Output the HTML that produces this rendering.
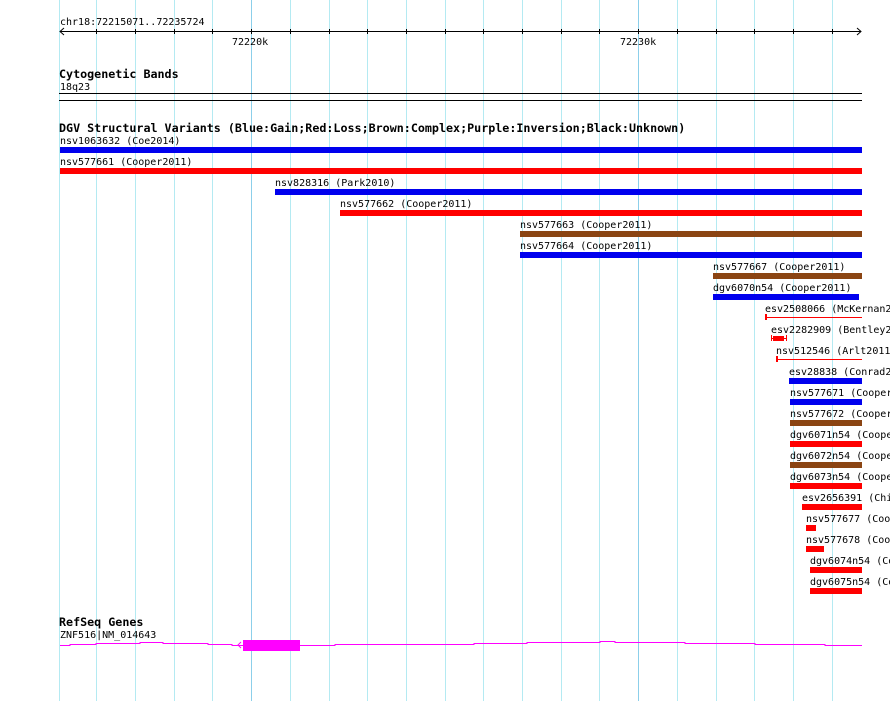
<!DOCTYPE html>
<html><head><meta charset="utf-8"><style>
body{margin:0;background:#fff;}
svg{display:block}
text{font-family:"DejaVu Sans Mono","Liberation Mono",monospace;font-size:10px;fill:#000}
.b{font-family:"DejaVu Sans Mono","Liberation Mono",monospace;font-weight:bold;font-size:11.7px}
</style></head><body>
<svg width="890" height="701" xmlns="http://www.w3.org/2000/svg">
<g stroke="#b4eaf2" stroke-width="1">
<line x1="59.5" y1="0" x2="59.5" y2="701"/>
<line x1="96.5" y1="0" x2="96.5" y2="701"/><line x1="135.5" y1="0" x2="135.5" y2="701"/><line x1="174.5" y1="0" x2="174.5" y2="701"/><line x1="212.5" y1="0" x2="212.5" y2="701"/>
<line x1="251.5" y1="0" x2="251.5" y2="701" stroke="#8ccfea"/><line x1="290.5" y1="0" x2="290.5" y2="701"/><line x1="329.5" y1="0" x2="329.5" y2="701"/><line x1="367.5" y1="0" x2="367.5" y2="701"/><line x1="406.5" y1="0" x2="406.5" y2="701"/><line x1="445.5" y1="0" x2="445.5" y2="701"/><line x1="483.5" y1="0" x2="483.5" y2="701"/><line x1="522.5" y1="0" x2="522.5" y2="701"/><line x1="561.5" y1="0" x2="561.5" y2="701"/><line x1="599.5" y1="0" x2="599.5" y2="701"/>
<line x1="638.5" y1="0" x2="638.5" y2="701" stroke="#8ccfea"/><line x1="677.5" y1="0" x2="677.5" y2="701"/><line x1="716.5" y1="0" x2="716.5" y2="701"/><line x1="754.5" y1="0" x2="754.5" y2="701"/><line x1="793.5" y1="0" x2="793.5" y2="701"/><line x1="832.5" y1="0" x2="832.5" y2="701"/>
</g>
<text x="60" y="25">chr18:72215071..72235724</text>
<line x1="60" y1="31.5" x2="861" y2="31.5" stroke="#000"/>
<path d="M64 28L60 31.5L64 35M857 28L861 31.5L857 35" fill="none" stroke="#000"/>
<g stroke="#000"><path d="M96.5 29v5M135.5 29v5M174.5 29v5M212.5 29v5M251.5 29v5M290.5 29v5M329.5 29v5M367.5 29v5M406.5 29v5M445.5 29v5M483.5 29v5M522.5 29v5M561.5 29v5M599.5 29v5M638.5 29v5M677.5 29v5M716.5 29v5M754.5 29v5M793.5 29v5M832.5 29v5"/></g>
<text x="232" y="45">72220k</text><text x="620" y="45">72230k</text>
<text x="59" y="78" class="b">Cytogenetic Bands</text>
<text x="60" y="90">18q23</text>
<line x1="59" y1="93.5" x2="862" y2="93.5" stroke="#000"/>
<line x1="59" y1="100.5" x2="862" y2="100.5" stroke="#000"/>
<text x="59" y="132" class="b">DGV Structural Variants (Blue:Gain;Red:Loss;Brown:Complex;Purple:Inversion;Black:Unknown)</text>
<g>
<text x="60" y="144">nsv1063632 (Coe2014)</text><rect x="60" y="147" width="802" height="6" fill="#0000ee"/>
<text x="60" y="165">nsv577661 (Cooper2011)</text><rect x="60" y="168" width="802" height="6" fill="#ff0000"/>
<text x="275" y="186">nsv828316 (Park2010)</text><rect x="275" y="189" width="587" height="6" fill="#0000ee"/>
<text x="340" y="207">nsv577662 (Cooper2011)</text><rect x="340" y="210" width="522" height="6" fill="#ff0000"/>
<text x="520" y="228">nsv577663 (Cooper2011)</text><rect x="520" y="231" width="342" height="6" fill="#8b4513"/>
<text x="520" y="249">nsv577664 (Cooper2011)</text><rect x="520" y="252" width="342" height="6" fill="#0000ee"/>
<text x="713" y="270">nsv577667 (Cooper2011)</text><rect x="713" y="273" width="149" height="6" fill="#8b4513"/>
<text x="713" y="291">dgv6070n54 (Cooper2011)</text><rect x="713" y="294" width="146" height="6" fill="#0000ee"/>
<text x="765" y="312">esv2508066 (McKernan2009)</text><rect x="765" y="317" width="97" height="1" fill="#ff0000"/><rect x="765" y="314" width="2" height="6" fill="#ff0000"/>
<text x="771" y="333">esv2282909 (Bentley2008)</text><rect x="771" y="338" width="16" height="1" fill="#ff0000"/><rect x="773" y="336" width="11" height="5" fill="#ff0000"/><rect x="771" y="335" width="1" height="6" fill="#ff0000"/><rect x="786" y="335" width="1" height="6" fill="#ff0000"/>
<text x="776" y="354">nsv512546 (Arlt2011)</text><rect x="776" y="359" width="86" height="1" fill="#ff0000"/><rect x="776" y="356" width="2" height="6" fill="#ff0000"/>
<text x="789" y="375">esv28838 (Conrad2009)</text><rect x="789" y="378" width="73" height="6" fill="#0000ee"/>
<text x="790" y="396">nsv577671 (Cooper2011)</text><rect x="790" y="399" width="72" height="6" fill="#0000ee"/>
<text x="790" y="417">nsv577672 (Cooper2011)</text><rect x="790" y="420" width="72" height="6" fill="#8b4513"/>
<text x="790" y="438">dgv6071n54 (Cooper2011)</text><rect x="790" y="441" width="72" height="6" fill="#ff0000"/>
<text x="790" y="459">dgv6072n54 (Cooper2011)</text><rect x="790" y="462" width="72" height="6" fill="#8b4513"/>
<text x="790" y="480">dgv6073n54 (Cooper2011)</text><rect x="790" y="483" width="72" height="6" fill="#ff0000"/>
<text x="802" y="501">esv2656391 (Chiang2012)</text><rect x="802" y="504" width="60" height="6" fill="#ff0000"/>
<text x="806" y="522">nsv577677 (Cooper2011)</text><rect x="806" y="525" width="10" height="6" fill="#ff0000"/>
<text x="806" y="543">nsv577678 (Cooper2011)</text><rect x="806" y="546" width="18" height="6" fill="#ff0000"/>
<text x="810" y="564">dgv6074n54 (Cooper2011)</text><rect x="810" y="567" width="52" height="6" fill="#ff0000"/>
<text x="810" y="585">dgv6075n54 (Cooper2011)</text><rect x="810" y="588" width="52" height="6" fill="#ff0000"/>
</g>
<text x="59" y="626" class="b">RefSeq Genes</text>
<text x="60" y="638">ZNF516|NM_014643</text>
<polyline fill="none" stroke="#ff00ff" stroke-width="1" points="60,645.5 70,645.5 70,644.5 96,644.5 96,643.5 140,643.5 140,642.5 163,642.5 163,643.5 208,643.5 208,644.5 232,644.5 232,645.5 243,645.5 300,645.5 335,645.5 335,644.5 474,644.5 474,643.5 527,643.5 527,642.5 600,642.5 600,641.5 615,641.5 615,642.5 685,642.5 685,643.5 755,643.5 755,644.5 825,644.5 825,645.5 862,645.5"/>
<path d="M241 642L238 645L241 648" fill="none" stroke="#ff00ff"/>
<rect x="243" y="640" width="57" height="11" fill="#ff00ff"/>
</svg>
</body></html>
